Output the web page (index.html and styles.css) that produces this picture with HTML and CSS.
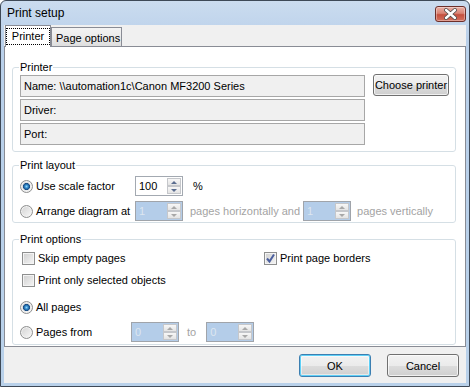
FILE: index.html
```html
<!DOCTYPE html>
<html lang="en">
<head>
    <meta charset="UTF-8">
    <title>Print setup</title>
    <link rel="stylesheet" href="styles.css">
</head>
<body>
    <div class="window">
        <div class="titlebar">
            <span class="title">Print setup</span>
            <span class="close">
                <svg width="29" height="14" viewBox="0 0 29 14">
                    <path d="M10 3 L19 11 M19 3 L10 11" stroke="#4a4a4a" stroke-width="4" stroke-linecap="round"/>
                    <path d="M10 3 L19 11 M19 3 L10 11" stroke="#fff" stroke-width="2.4" stroke-linecap="round"/>
                </svg>
            </span>
        </div>
        <div class="client">
            <div class="tabs">
                <div class="tab tab-active"><span class="focus">Printer</span></div>
                <div class="tab tab-idle">Page options</div>
            </div>
            <div class="panel">
                <fieldset class="group printer">
                    <legend>Printer</legend>
                    <div class="printer-body">
                        <div class="fields">
                            <div class="field">Name: \\automation1c\Canon MF3200 Series</div>
                            <div class="field">Driver:</div>
                            <div class="field">Port:</div>
                        </div>
                        <button class="btn btn-choose">Choose printer</button>
                    </div>
                </fieldset>

                <fieldset class="group layout">
                    <legend>Print layout</legend>
                    <div class="row">
                        <label class="radio-label"><span class="radio on"></span>Use scale factor</label>
                        <span class="spin">
                            <span class="spin-val">100</span>
                            <span class="spin-btns"><span class="up"></span><span class="dn"></span></span>
                        </span>
                        <span class="unit">%</span>
                    </div>
                    <div class="row row-gap">
                        <label class="radio-label"><span class="radio"></span>Arrange diagram at</label>
                        <span class="spin off">
                            <span class="spin-val">1</span>
                            <span class="spin-btns"><span class="up"></span><span class="dn"></span></span>
                        </span>
                        <span class="muted muted-h">pages horizontally and</span>
                        <span class="spin off">
                            <span class="spin-val">1</span>
                            <span class="spin-btns"><span class="up"></span><span class="dn"></span></span>
                        </span>
                        <span class="muted muted-v">pages vertically</span>
                    </div>
                </fieldset>

                <fieldset class="group options">
                    <legend>Print options</legend>
                    <div class="opt-row">
                        <label class="check-label check-first"><span class="check"></span>Skip empty pages</label>
                        <label class="check-label"><span class="check on">
                            <svg width="11" height="11" viewBox="0 0 11 11"><path d="M2 5.5 L4.5 8.5 L9 1.5" fill="none" stroke="#4b5f9e" stroke-width="2"/></svg>
                        </span>Print page borders</label>
                    </div>
                    <div class="opt-row opt-second">
                        <label class="check-label check-first"><span class="check"></span>Print only selected objects</label>
                    </div>
                    <div class="opt-row opt-third">
                        <label class="radio-label"><span class="radio on"></span>All pages</label>
                    </div>
                    <div class="opt-row opt-fourth">
                        <label class="radio-label radio-short"><span class="radio"></span>Pages from</label>
                        <span class="spin off">
                            <span class="spin-val">0</span>
                            <span class="spin-btns"><span class="up"></span><span class="dn"></span></span>
                        </span>
                        <span class="muted muted-to">to</span>
                        <span class="spin off spin-to">
                            <span class="spin-val">0</span>
                            <span class="spin-btns"><span class="up"></span><span class="dn"></span></span>
                        </span>
                    </div>
                </fieldset>
            </div>
            <div class="actions">
                <button class="btn btn-default">OK</button>
                <button class="btn">Cancel</button>
            </div>
        </div>
    </div>
</body>
</html>
```

FILE: styles.css
```css
* {
    box-sizing: border-box;
}
body {
    margin: 0;
    font-family: "Liberation Sans", Arial, sans-serif;
    font-size: 11px;
    color: #000;
}
.window {
    width: 470px;
    height: 387px;
    border: 1px solid #3e4957;
    border-radius: 6px 6px 0 0;
    background: linear-gradient(#cbdcef, #b9d0ea 40px, #b9d1ea);
    padding: 0 3px 3px;
    display: flex;
    flex-direction: column;
    overflow: hidden;
}
.titlebar {
    height: 24px;
    display: flex;
    align-items: center;
    justify-content: space-between;
    padding-left: 3px;
}
.title {
    font-size: 12px;
}
.close {
    width: 31px;
    height: 16px;
    margin-top: 2px;
    border: 1px solid #6d2f2a;
    border-radius: 3px;
    background: linear-gradient(#eab0a5, #d98475 45%, #c4503f 55%, #d4715f);
    box-shadow: inset 0 0 0 1px rgba(255, 255, 255, 0.35);
    display: flex;
}
.client {
    flex: 1;
    background: #f0f0f0;
    display: flex;
    flex-direction: column;
}
.tabs {
    height: 21px;
    display: flex;
    align-items: flex-end;
    padding-left: 1px;
}
.tab {
    border: 1px solid #898c95;
    border-bottom: 0;
}
.tab-active {
    position: relative;
    width: 46px;
    height: 22px;
    margin-bottom: -1px;
    padding-top: 2px;
    background: #fff;
}
.focus {
    display: block;
    height: 17px;
    border: 1px dotted #000;
    line-height: 15px;
    text-align: center;
}
.tab-idle {
    width: 71px;
    height: 19px;
    padding: 3px 0 0 4px;
    line-height: 14px;
    background: linear-gradient(#f3f3f3, #ebebeb 50%, #dedede);
}
.panel {
    height: 301px;
    background: #fff;
    border: 1px solid #898c95;
    padding: 14px 9px 0 7px;
}
.group {
    margin: 0;
    min-width: 0;
    border: 1px solid #d5dfe5;
    border-radius: 3px;
}
.group legend {
    padding: 0 1px;
    margin-left: -1px;
    line-height: 13px;
}
.printer {
    padding: 1px 6px 6px 7px;
}
.printer-body {
    display: flex;
    align-items: flex-start;
    gap: 8px;
}
.fields {
    width: 345px;
    display: flex;
    flex-direction: column;
    gap: 2px;
}
.field {
    height: 22px;
    border: 1px solid #a7a7a7;
    background: #f0f0f0;
    padding-left: 3px;
    line-height: 20px;
}
.btn {
    font-family: inherit;
    font-size: 11px;
    color: #000;
    padding: 0;
    border: 1px solid #707070;
    border-radius: 3px;
    background: linear-gradient(#f2f2f2, #ebebeb 50%, #dddddd 50%, #cfcfcf);
    box-shadow: inset 0 0 0 1px rgba(255, 255, 255, 0.7);
    width: 72px;
    height: 23px;
}
.btn-choose {
    width: 76px;
    height: 22px;
    margin-top: -1px;
}
.btn-default {
    border-color: #3c7fb1;
    box-shadow: inset 0 0 0 1px #5fd0f7, inset 0 0 0 2px rgba(255, 255, 255, 0.5);
}
.layout {
    margin-top: 7px;
    padding: 4px 7px 1px 7px;
}
.row {
    display: flex;
    align-items: center;
    height: 20px;
}
.row-gap {
    margin-top: 5px;
}
.radio-label,
.check-label {
    display: flex;
    align-items: center;
    gap: 3px;
}
.radio-label {
    width: 115px;
}
.radio-short {
    width: 111px;
}
.radio {
    width: 13px;
    height: 13px;
    border: 1px solid #8e8f8f;
    border-radius: 50%;
    background: linear-gradient(135deg, #d2d2d2, #f9f9f9);
    box-shadow: inset 0 0 0 1px #f2f2f2;
}
.radio.on {
    background: radial-gradient(circle, #8fd6fb 0, #2c82c4 1.8px, #17477d 3.3px, rgba(23, 71, 125, 0) 3.8px),
        linear-gradient(135deg, #d2d2d2, #f9f9f9);
}
.check {
    width: 13px;
    height: 13px;
    border: 1px solid #8e8f8f;
    background: linear-gradient(135deg, #cfcfcf, #f6f6f6);
    box-shadow: inset 0 0 0 1px #f4f4f4;
    display: flex;
}
.check-first {
    width: 242px;
    margin-left: 2px;
}
.spin {
    width: 48px;
    height: 20px;
    border: 1px solid #a3a9b1;
    background: #fff;
    display: flex;
}
.spin.off {
    background: #b4cde9;
    border-color: #a0a4aa;
}
.spin-val {
    flex: 1;
    padding-left: 3px;
    line-height: 18px;
}
.spin.off .spin-val {
    color: #dde6f0;
}
.spin-btns {
    width: 15px;
    padding: 1px 1px 1px 0;
    display: flex;
    flex-direction: column;
}
.up,
.dn {
    flex: 1;
    border: 1px solid #c5c7cb;
    background: linear-gradient(#f7f7f7, #e4e4e4);
    display: flex;
    align-items: center;
    justify-content: center;
}
.up::after,
.dn::after {
    content: "";
    border-left: 3px solid transparent;
    border-right: 3px solid transparent;
}
.up::after {
    border-bottom: 3px solid #5a6d8f;
}
.dn::after {
    border-top: 3px solid #5a6d8f;
}
.spin.off .up::after {
    border-bottom-color: #a8a8a8;
}
.spin.off .dn::after {
    border-top-color: #a8a8a8;
}
.unit {
    margin-left: 10px;
}
.muted {
    color: #a3a3a3;
}
.muted-h {
    margin: 0 3px 0 7px;
}
.muted-v {
    margin-left: 6px;
}
.muted-to {
    margin: 0 10px 0 8px;
}
.options {
    margin-top: 10px;
    padding: 4px 7px 2px 7px;
}
.opt-row {
    display: flex;
    align-items: center;
    height: 16px;
}
.opt-second {
    margin-top: 6px;
}
.opt-third {
    margin-top: 11px;
}
.opt-fourth {
    margin-top: 7px;
    height: 20px;
}
.actions {
    display: flex;
    justify-content: flex-end;
    gap: 16px;
    padding: 7px 7px 0 0;
}
```
